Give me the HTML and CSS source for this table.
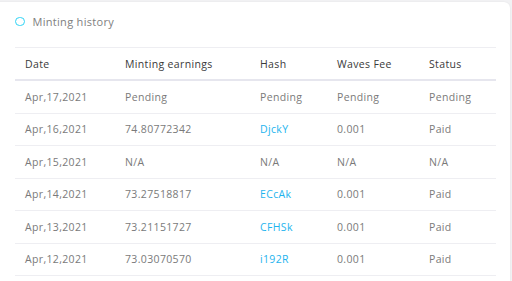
FILE: index.html
```html
<!DOCTYPE html>
<html>
<head>
<meta charset="utf-8">
<link rel="stylesheet" href="styles.css">
</head>
<body>
<div class="card">
  <div class="title">
    <span class="ring"></span>
    <span class="title-text">Minting history</span>
  </div>
  <table class="tbl">
    <colgroup>
      <col class="c1"><col class="c2"><col class="c3"><col class="c4"><col class="c5">
    </colgroup>
    <thead>
      <tr><th>Date</th><th>Minting earnings</th><th>Hash</th><th>Waves Fee</th><th>Status</th></tr>
    </thead>
    <tbody>
      <tr><td>Apr,17,2021</td><td>Pending</td><td>Pending</td><td>Pending</td><td>Pending</td></tr>
      <tr><td>Apr,16,2021</td><td>74.80772342</td><td class="link">DjckY</td><td>0.001</td><td>Paid</td></tr>
      <tr><td>Apr,15,2021</td><td>N/A</td><td>N/A</td><td>N/A</td><td>N/A</td></tr>
      <tr><td>Apr,14,2021</td><td>73.27518817</td><td class="link">ECcAk</td><td>0.001</td><td>Paid</td></tr>
      <tr><td>Apr,13,2021</td><td>73.21151727</td><td class="link">CFHSk</td><td>0.001</td><td>Paid</td></tr>
      <tr><td>Apr,12,2021</td><td>73.03070570</td><td class="link">i192R</td><td>0.001</td><td>Paid</td></tr>
    </tbody>
  </table>
</div>
</body>
</html>
```
FILE: styles.css
```css
html, body {
  margin: 0;
  padding: 0;
  background: #f2f2f4;
  font-family: "Open Sans", "Noto Sans", sans-serif;
  overflow: hidden;
  height: 281px;
}
.card {
  box-sizing: border-box;
  margin: 2px 2px 0 -10px;
  background: #fff;
  border-radius: 0 6px 0 0;
  box-shadow: 0 0 2px rgba(0,0,0,0.08);
  padding: 10px 14px 0 25px;
  height: 279px;
}
.title {
  display: flex;
  align-items: center;
  height: 19px;
}
.ring {
  box-sizing: border-box;
  width: 9.5px;
  height: 9.5px;
  border: 1.3px solid #2fd3f5;
  border-radius: 50%;
  margin-right: 8px;
  flex: none;
}
.title-text {
  font-size: 11px;
  color: #808080;
  letter-spacing: 0.3px;
}
.tbl {
  margin-top: 16px;
  width: 481px;
  border-collapse: collapse;
  table-layout: fixed;
  font-size: 10.5px;
  letter-spacing: 0.35px;
}
.c1 { width: 100px; }
.c2 { width: 135px; }
.c3 { width: 77px; }
.c4 { width: 92px; }
.c5 { width: 77px; }
.tbl th {
  text-align: left;
  font-weight: 400;
  color: #3a3a3a;
  height: 31px;
  padding: 0 0 0 10px;
  border-top: 1px solid #eeeef2;
  border-bottom: 2px solid #e6e6ee;
}
.tbl td {
  color: #7a7a7a;
  height: 31.5px;
  padding: 0 0 0 10px;
  border-bottom: 1px solid #eeeef2;
}
.tbl td.link {
  color: #1eb4ee;
}
```
